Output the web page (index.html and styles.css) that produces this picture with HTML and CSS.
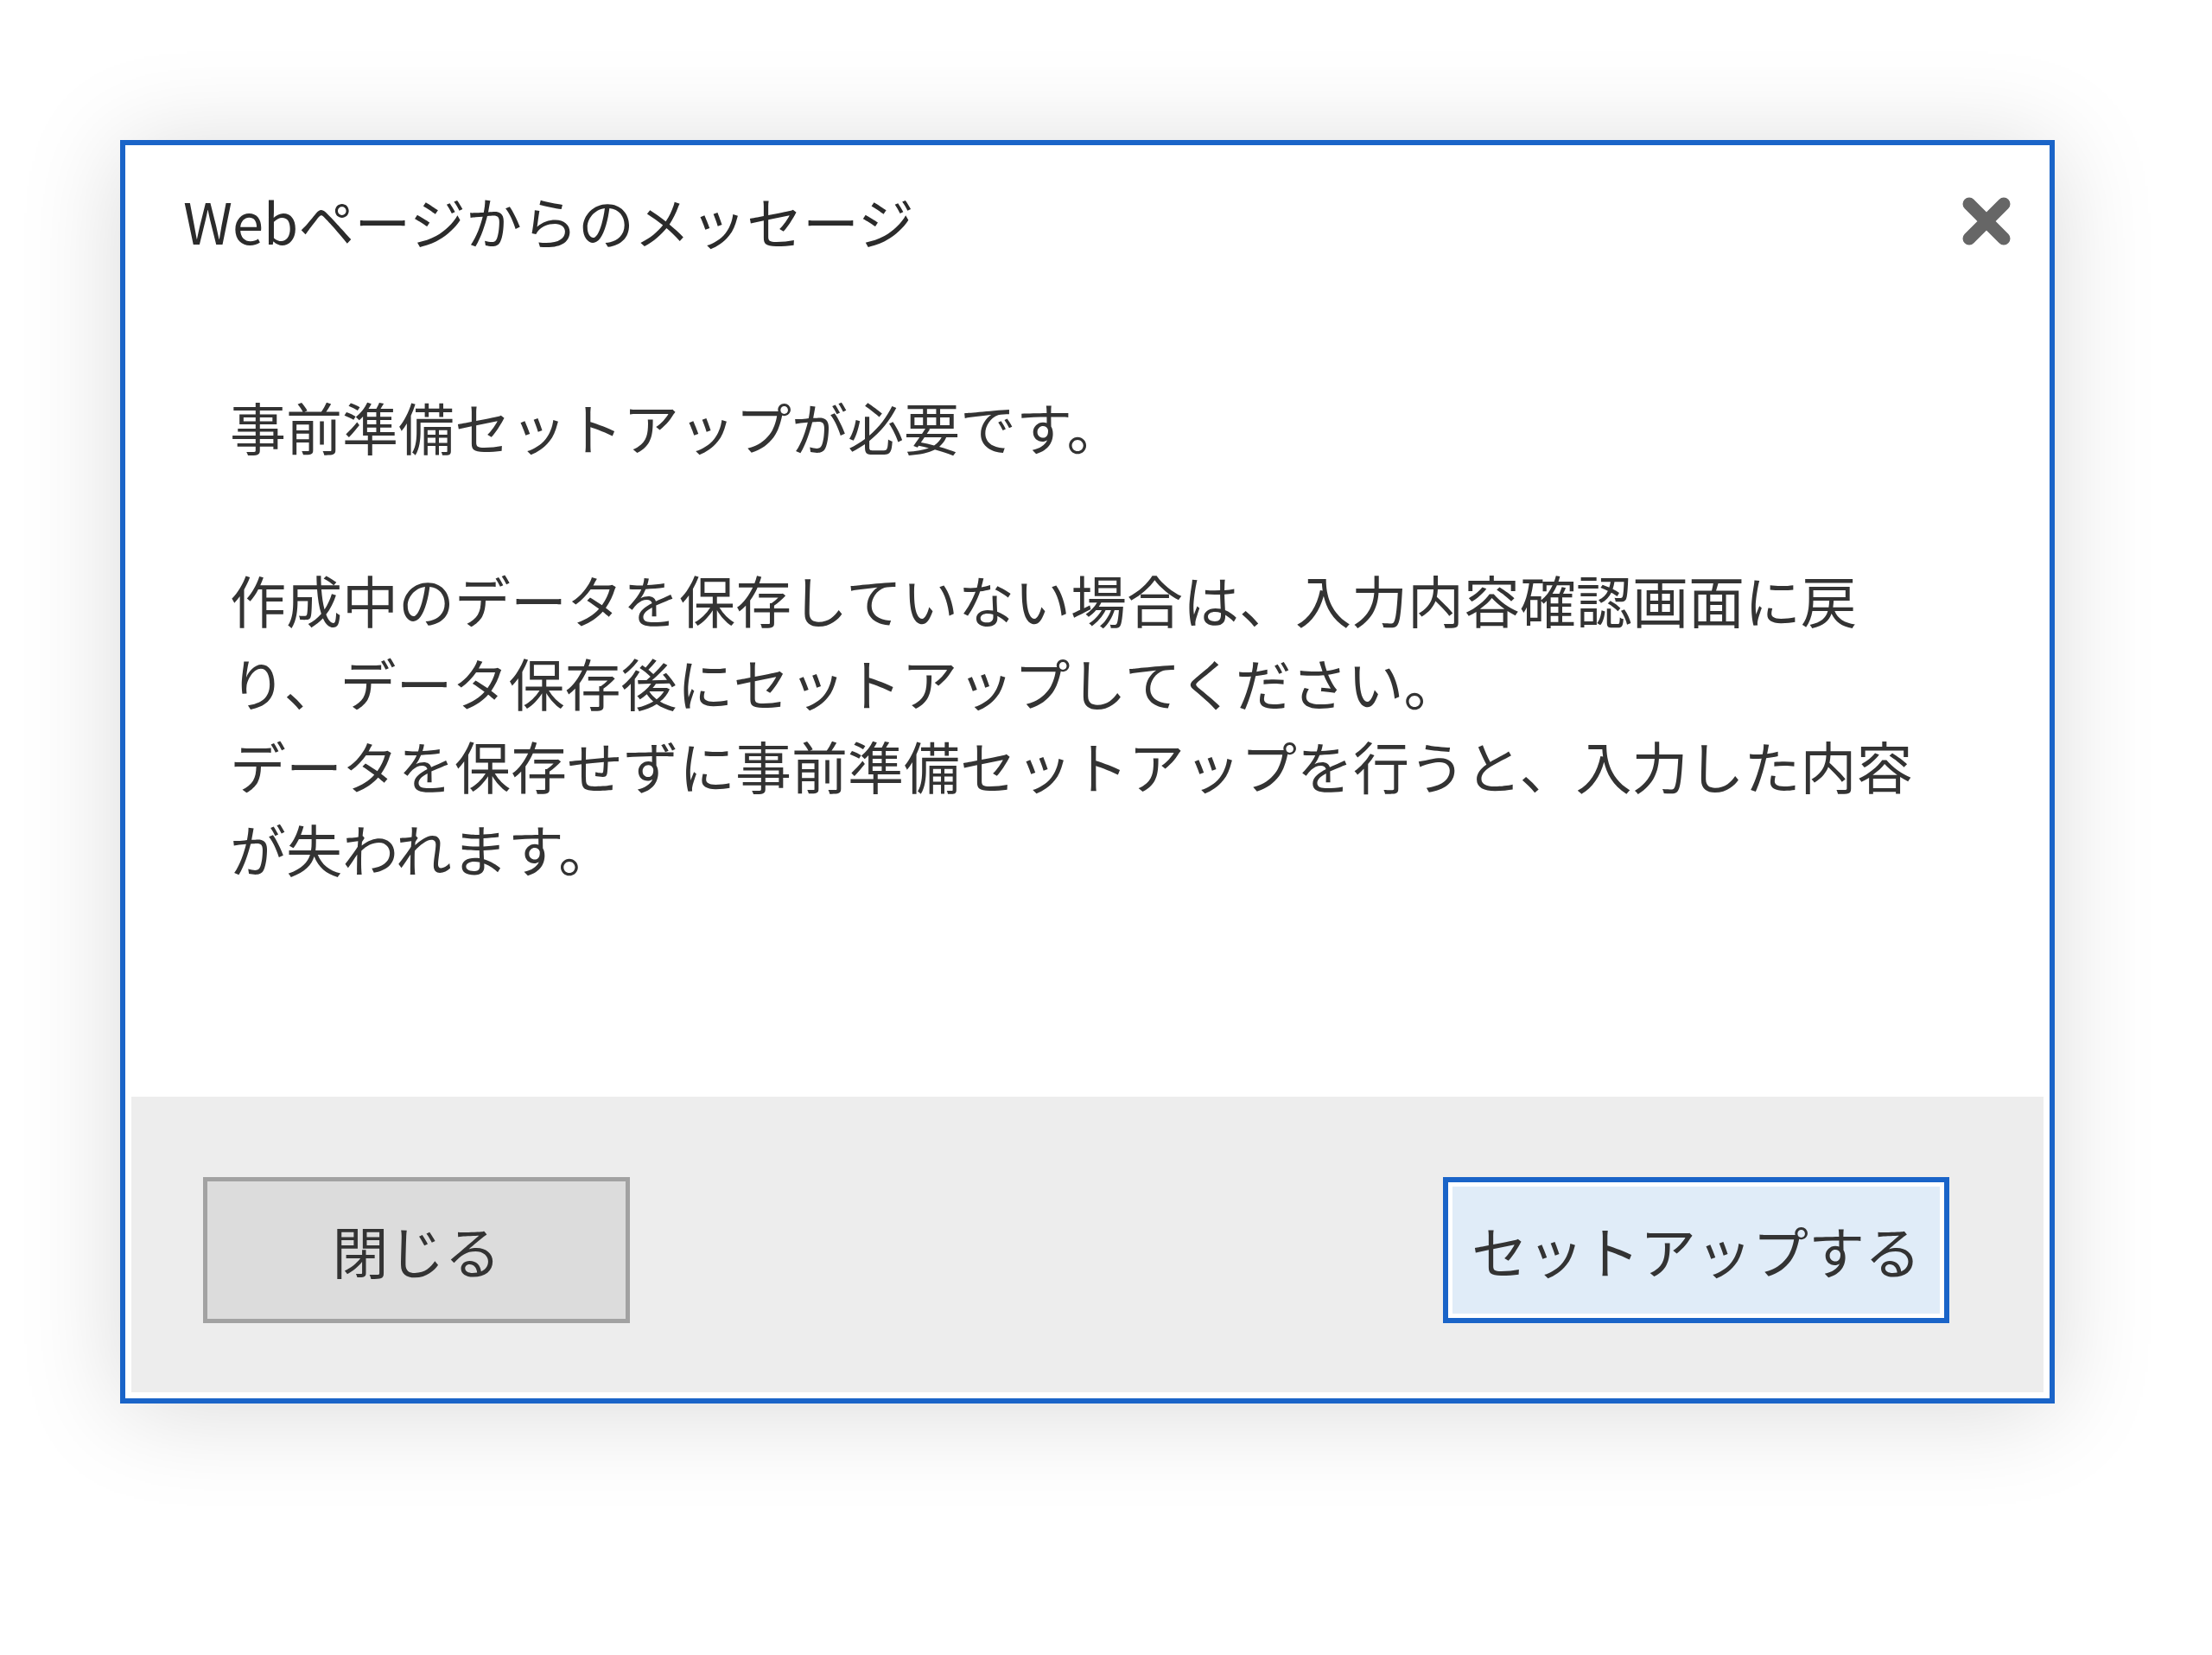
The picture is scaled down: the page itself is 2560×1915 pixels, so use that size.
FILE: index.html
```html
<!DOCTYPE html>
<html lang="ja">
    <head>
        <meta charset="utf-8">
        <title>Webページからのメッセージ</title>
        <link rel="stylesheet" href="styles.css">
    </head>
    <body>
        <div id="container">
            <div class="dialog">
                <div class="dialog-header">
                    <div class="dialog-title">Webページからのメッセージ</div>
                    <button class="dialog-close" aria-label="閉じる">
                        <svg viewBox="0 0 56 56" width="56" height="56">
                            <path d="M8 8 L48 48 M48 8 L8 48" stroke="#666" stroke-width="15" stroke-linecap="round" fill="none"/>
                        </svg>
                    </button>
                </div>
                <div class="dialog-body">
                    <p class="lead">事前準備セットアップが必要です。</p>
                    <p>作成中のデータを保存していない場合は、入力内容確認画面に戻り、データ保存後にセットアップしてください。<br>データを保存せずに事前準備セットアップを行うと、入力した内容が失われます。</p>
                </div>
                <div class="dialog-footer">
                    <button class="btn btn-cancel">閉じる</button>
                    <button class="btn btn-primary">セットアップする</button>
                </div>
            </div>
        </div>
    </body>
</html>
```

FILE: styles.css
```css
html, body {
    height: 100%;
}

body {
    margin: 0;
    background-color: white;
    color: #333;
    font-family: "Noto Sans CJK JP", "Noto Sans", sans-serif;
    font-size: 65px;
    line-height: 1.5;
}

#container {
    min-height: 100%;
    box-sizing: border-box;
    padding: 162px 0 0 139px;
}

.dialog {
    width: 2239px;
    box-sizing: border-box;
    border: 6px solid #1a64c8;
    padding: 7px;
    background-color: white;
    box-shadow: 0 8px 110px rgba(0, 0, 0, 0.15);
}

/* ---------- header ------------- */
.dialog-header {
    display: flex;
    justify-content: space-between;
    align-items: center;
    padding: 32px 38px 0 60px;
}

.dialog-title {
    color: #2b2b2b;
}

.dialog-close {
    width: 56px;
    height: 56px;
    padding: 0;
    border: none;
    background: none;
}

.dialog-close svg {
    display: block;
}

/* ---------- body ------------- */
.dialog-body {
    padding: 140px 114px 240px 114px;
    line-height: 96px;
}

.dialog-body p {
    margin: 0;
}

.dialog-body .lead {
    margin-bottom: 104px;
}

/* ---------- footer ------------- */
.dialog-footer {
    display: flex;
    justify-content: space-between;
    padding: 93px 109px 80px 83px;
    background-color: #ededed;
}

.btn {
    height: 169px;
    box-sizing: border-box;
    font-family: inherit;
    font-size: 65px;
    line-height: 1;
    color: #333;
}

.btn-cancel {
    width: 494px;
    border: 5px solid #a2a2a2;
    background-color: #dcdcdc;
}

.btn-primary {
    padding: 0 27px;
    border: 6px solid #1a64c8;
    background-color: #e0ecf8;
    box-shadow: inset 0 0 0 5px white;
}
```
